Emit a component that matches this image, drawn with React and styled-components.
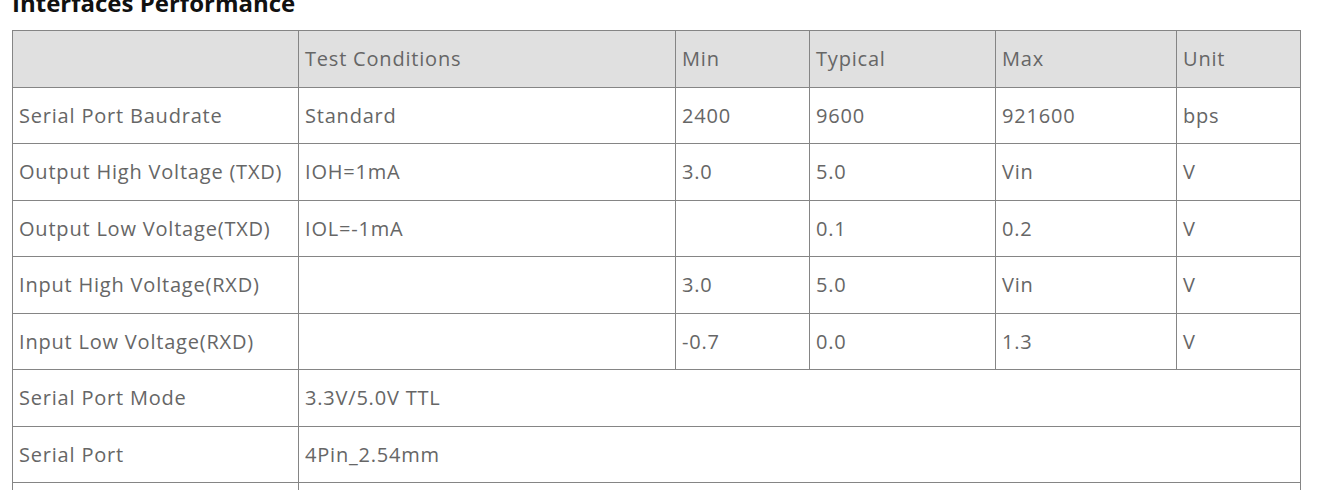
import React from 'react';
import styled, { createGlobalStyle } from 'styled-components';

const Global = createGlobalStyle`
  body {
    margin: 0;
    background: #fff;
    font-family: "Open Sans", "Noto Sans", sans-serif;
  }
`;

const Page = styled.div`
  padding: 0 12px;
  margin-top: -12px;
`;

const Title = styled.h3`
  margin: 0 0 12px;
  font-size: 24px;
  line-height: 30px;
  font-weight: 700;
  color: #111;
`;

const Table = styled.table`
  width: 1288px;
  border-collapse: collapse;
  table-layout: fixed;
  font-size: 20px;
  letter-spacing: 0.8px;
  color: #666;
`;

const Cell = styled.td`
  border: 1px solid #858585;
  padding: 0 6px;
  height: 55.5px;
  text-align: left;
  font-weight: 400;
  white-space: nowrap;
  background: ${({ $head }) => ($head ? '#e0e0e0' : '#fff')};
`;

const cols = [286, 377, 134, 186, 181, 124];

const header = ['', 'Test Conditions', 'Min', 'Typical', 'Max', 'Unit'];

const rows = [
  ['Serial Port Baudrate', 'Standard', '2400', '9600', '921600', 'bps'],
  ['Output High Voltage (TXD)', 'IOH=1mA', '3.0', '5.0', 'Vin', 'V'],
  ['Output Low Voltage(TXD)', 'IOL=-1mA', '', '0.1', '0.2', 'V'],
  ['Input High Voltage(RXD)', '', '3.0', '5.0', 'Vin', 'V'],
  ['Input Low Voltage(RXD)', '', '-0.7', '0.0', '1.3', 'V'],
];

const spans = [
  ['Serial Port Mode', '3.3V/5.0V TTL'],
  ['Serial Port', '4Pin_2.54mm'],
  ['', ''],
];

export default function App() {
  return (
    <Page>
      <Global />
      <Title>Interfaces Performance</Title>
      <Table>
        <colgroup>
          {cols.map((w, i) => (
            <col key={i} style={{ width: w }} />
          ))}
        </colgroup>
        <thead>
          <tr>
            {header.map((h, i) => (
              <Cell as="th" $head key={i}>{h}</Cell>
            ))}
          </tr>
        </thead>
        <tbody>
          {rows.map((r, i) => (
            <tr key={i}>
              {r.map((c, j) => (
                <Cell key={j}>{c}</Cell>
              ))}
            </tr>
          ))}
          {spans.map((r, i) => (
            <tr key={'s' + i}>
              <Cell>{r[0]}</Cell>
              <Cell colSpan={5}>{r[1]}</Cell>
            </tr>
          ))}
        </tbody>
      </Table>
    </Page>
  );
}
